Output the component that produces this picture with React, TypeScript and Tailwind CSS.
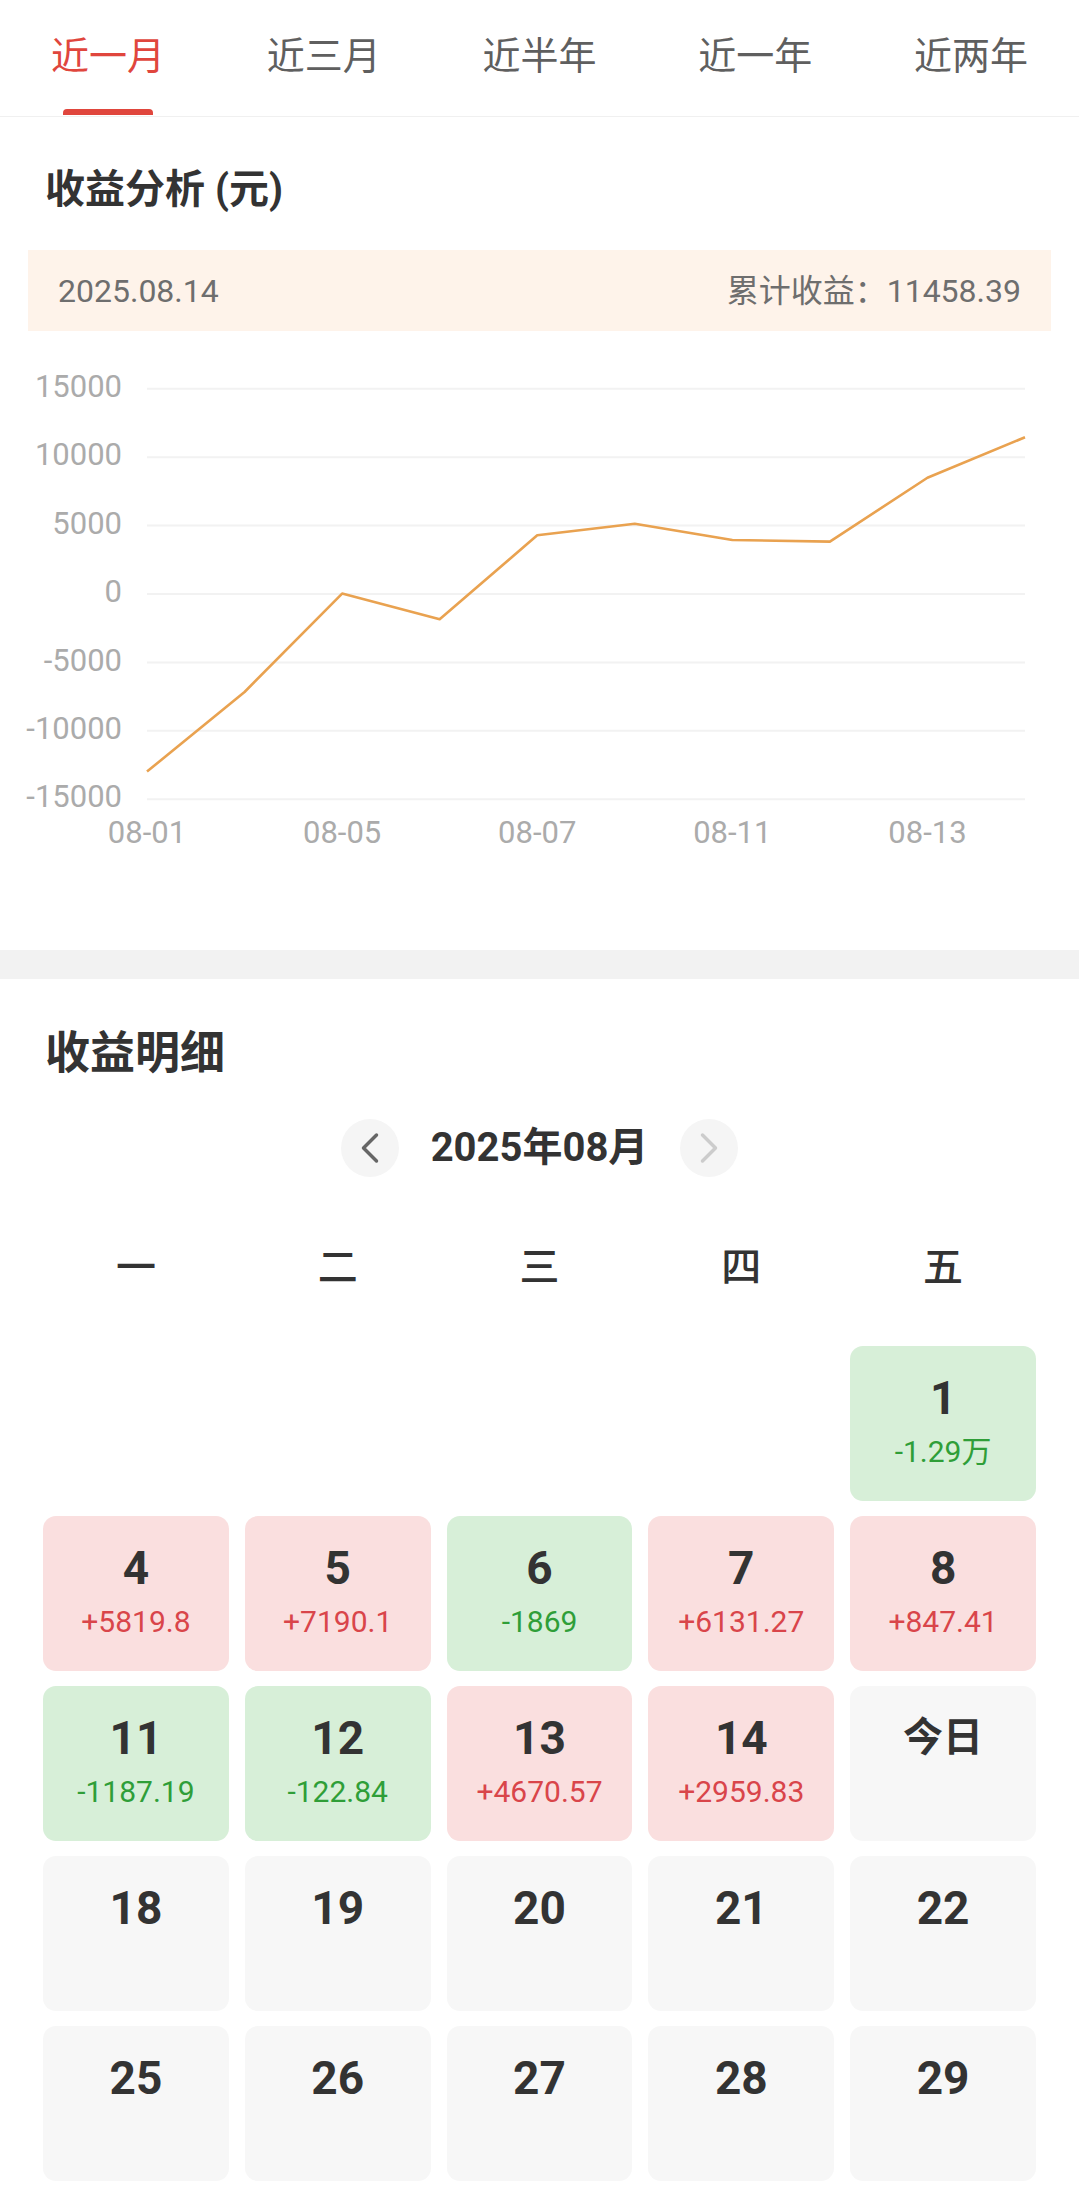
import { ChevronLeft, ChevronRight } from "lucide-react";

const tabs = ["近一月", "近三月", "近半年", "近一年", "近两年"];

// 每日收益（8月）
const days = [
  { day: 1, amount: -12981.56, label: "-1.29万" },
  { day: 4, amount: 5819.8, label: "+5819.8" },
  { day: 5, amount: 7190.1, label: "+7190.1" },
  { day: 6, amount: -1869, label: "-1869" },
  { day: 7, amount: 6131.27, label: "+6131.27" },
  { day: 8, amount: 847.41, label: "+847.41" },
  { day: 11, amount: -1187.19, label: "-1187.19" },
  { day: 12, amount: -122.84, label: "-122.84" },
  { day: 13, amount: 4670.57, label: "+4670.57" },
  { day: 14, amount: 2959.83, label: "+2959.83" },
];

const xLabels = ["08-01", "08-05", "08-07", "08-11", "08-13"];
const yTicks = [15000, 10000, 5000, 0, -5000, -10000, -15000];

// chart geometry
const X0 = 147;
const X1 = 1025;
const ZERO = 263;
const K = 68.4 / 5000;

function Chart() {
  let sum = 0;
  const step = (X1 - X0) / (days.length - 1);
  const points = days
    .map((d, i) => {
      sum += d.amount;
      return `${X0 + i * step},${ZERO - sum * K}`;
    })
    .join(" ");

  return (
    <svg width="1079" height="619" viewBox="0 0 1079 619" className="block">
      {yTicks.map((t) => {
        const y = ZERO - t * K;
        return (
          <g key={t}>
            <line x1={X0} x2={X1} y1={y} y2={y} stroke="#f2f2f2" strokeWidth="2" />
            <text
              x="122"
              y={y}
              textAnchor="end"
              dominantBaseline="middle"
              fill="#ababab"
              fontSize="31"
              fontFamily="Roboto, sans-serif"
            >
              {t}
            </text>
          </g>
        );
      })}
      {xLabels.map((l, i) => (
        <text
          key={l}
          x={X0 + i * 2 * step}
          y="504"
          textAnchor="middle"
          dominantBaseline="middle"
          fill="#ababab"
          fontSize="31"
          fontFamily="Roboto, sans-serif"
        >
          {l}
        </text>
      ))}
      <polyline
        points={points}
        fill="none"
        stroke="#e9a250"
        strokeWidth="2.6"
        strokeLinejoin="round"
      />
    </svg>
  );
}

type Cell = { day: number; amount?: number; label?: string; today?: boolean } | null;

function buildCells(): Cell[] {
  const map = new Map(days.map((d) => [d.day, d]));
  const cells: Cell[] = [null, null, null, null];
  const weekdays = [1, 4, 5, 6, 7, 8, 11, 12, 13, 14, 15, 18, 19, 20, 21, 22, 25, 26, 27, 28, 29];
  weekdays.forEach((d) => {
    const data = map.get(d);
    if (data) cells.push(data);
    else cells.push({ day: d, today: d === 15 });
  });
  return cells;
}

function DayCell({ cell }: { cell: Cell }) {
  if (!cell) return <div className="h-[155px]" />;
  const has = cell.amount !== undefined;
  const up = has && (cell.amount as number) >= 0;
  const bg = !has ? "bg-[#f7f7f7]" : up ? "bg-[#fadfdf]" : "bg-[#d7efd8]";
  return (
    <div className={`h-[155px] rounded-[13px] ${bg} flex flex-col items-center pt-[27px]`}>
      {cell.today ? (
        <div className="text-[40px] leading-[50px] font-bold text-[#333]">今日</div>
      ) : (
        <div className="text-[46px] leading-[50px] font-bold text-[#333]">{cell.day}</div>
      )}
      {has && (
        <div
          className={`mt-[9px] text-[30px] leading-[40px] ${
            up ? "text-[#d9454a]" : "text-[#2f9e38]"
          }`}
        >
          {cell.label}
        </div>
      )}
    </div>
  );
}

export default function App() {
  const cells = buildCells();
  return (
    <div className="w-[1079px] bg-white font-['Roboto','Noto_Sans_CJK_SC',sans-serif]">
      {/* Tabs */}
      <div className="flex h-[117px] border-b border-[#f0f0f0]">
        {tabs.map((t, i) => (
          <div key={t} className="relative flex-1 flex justify-center pt-[30px]">
            <span
              className={`text-[38px] leading-[52px] ${
                i === 0 ? "text-[#e0463d]" : "text-[#5f5f5f]"
              }`}
            >
              {t}
            </span>
            {i === 0 && (
              <div className="absolute bottom-[1px] left-1/2 -translate-x-1/2 w-[90px] h-[6px] rounded-t-[4px] bg-[#e0463d]" />
            )}
          </div>
        ))}
      </div>

      {/* 收益分析 */}
      <div className="pt-[45px]">
        <h2 className="px-[45px] text-[40px] leading-[56px] font-bold text-[#333]">收益分析 (元)</h2>
        <div className="mt-[32px] mx-[28px] h-[81px] bg-[#fef3ea] px-[30px] flex items-center justify-between text-[32px] text-[#6e6e6e]">
          <span>2025.08.14</span>
          <span>累计收益：11458.39</span>
        </div>
        <Chart />
      </div>

      <div className="h-[29px] bg-[#f2f2f2]" />

      {/* 收益明细 */}
      <div className="pt-[45px] pb-[27px]">
        <h2 className="px-[45px] text-[45px] leading-[60px] font-bold text-[#333]">收益明细</h2>

        <div className="mt-[35px] flex items-center justify-center gap-[32px]">
          <div className="w-[58px] h-[58px] rounded-full bg-[#f5f5f5] flex items-center justify-center">
            <ChevronLeft size={52} strokeWidth={1.6} color="#666" />
          </div>
          <span className="text-[40px] leading-[58px] font-bold text-[#333]">2025年08月</span>
          <div className="w-[58px] h-[58px] rounded-full bg-[#f5f5f5] flex items-center justify-center">
            <ChevronRight size={52} strokeWidth={1.6} color="#cccccc" />
          </div>
        </div>

        <div className="mt-[61px] px-[43px] grid grid-cols-5 gap-x-[16px]">
          {["一", "二", "三", "四", "五"].map((w) => (
            <div key={w} className="text-center text-[40px] leading-[60px] font-medium text-[#333]">
              {w}
            </div>
          ))}
        </div>

        <div className="mt-[48px] px-[43px] grid grid-cols-5 gap-x-[16px] gap-y-[15px]">
          {cells.map((c, i) => (
            <DayCell key={i} cell={c} />
          ))}
        </div>
      </div>
    </div>
  );
}
